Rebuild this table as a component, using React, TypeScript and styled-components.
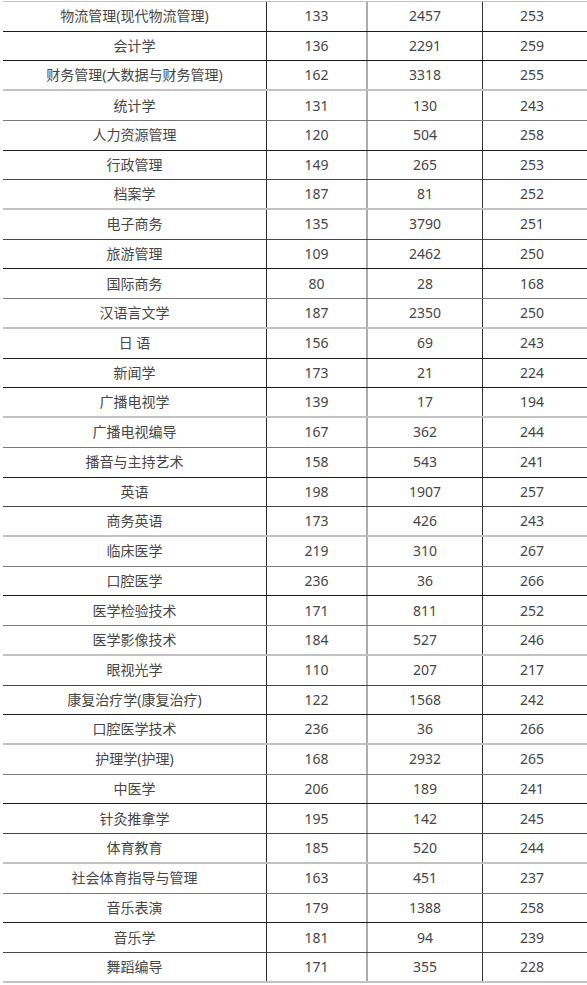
import styled, { createGlobalStyle } from 'styled-components'

type Tone = 'dark' | 'deep' | 'mid' | 'light'

type Major = {
  name: string
  plan: number
  applicants: number
  score: number
  tone: Tone
}

const majors: Major[] = [
  { name: '物流管理(现代物流管理)', plan: 133, applicants: 2457, score: 253, tone: 'dark' },
  { name: '会计学', plan: 136, applicants: 2291, score: 259, tone: 'dark' },
  { name: '财务管理(大数据与财务管理)', plan: 162, applicants: 3318, score: 255, tone: 'light' },
  { name: '统计学', plan: 131, applicants: 130, score: 243, tone: 'mid' },
  { name: '人力资源管理', plan: 120, applicants: 504, score: 258, tone: 'dark' },
  { name: '行政管理', plan: 149, applicants: 265, score: 253, tone: 'deep' },
  { name: '档案学', plan: 187, applicants: 81, score: 252, tone: 'light' },
  { name: '电子商务', plan: 135, applicants: 3790, score: 251, tone: 'deep' },
  { name: '旅游管理', plan: 109, applicants: 2462, score: 250, tone: 'dark' },
  { name: '国际商务', plan: 80, applicants: 28, score: 168, tone: 'mid' },
  { name: '汉语言文学', plan: 187, applicants: 2350, score: 250, tone: 'light' },
  { name: '日 语', plan: 156, applicants: 69, score: 243, tone: 'dark' },
  { name: '新闻学', plan: 173, applicants: 21, score: 224, tone: 'dark' },
  { name: '广播电视学', plan: 139, applicants: 17, score: 194, tone: 'light' },
  { name: '广播电视编导', plan: 167, applicants: 362, score: 244, tone: 'mid' },
  { name: '播音与主持艺术', plan: 158, applicants: 543, score: 241, tone: 'dark' },
  { name: '英语', plan: 198, applicants: 1907, score: 257, tone: 'deep' },
  { name: '商务英语', plan: 173, applicants: 426, score: 243, tone: 'light' },
  { name: '临床医学', plan: 219, applicants: 310, score: 267, tone: 'mid' },
  { name: '口腔医学', plan: 236, applicants: 36, score: 266, tone: 'dark' },
  { name: '医学检验技术', plan: 171, applicants: 811, score: 252, tone: 'mid' },
  { name: '医学影像技术', plan: 184, applicants: 527, score: 246, tone: 'light' },
  { name: '眼视光学', plan: 110, applicants: 207, score: 217, tone: 'deep' },
  { name: '康复治疗学(康复治疗)', plan: 122, applicants: 1568, score: 242, tone: 'dark' },
  { name: '口腔医学技术', plan: 236, applicants: 36, score: 266, tone: 'light' },
  { name: '护理学(护理)', plan: 168, applicants: 2932, score: 265, tone: 'mid' },
  { name: '中医学', plan: 206, applicants: 189, score: 241, tone: 'dark' },
  { name: '针灸推拿学', plan: 195, applicants: 142, score: 245, tone: 'deep' },
  { name: '体育教育', plan: 185, applicants: 520, score: 244, tone: 'light' },
  { name: '社会体育指导与管理', plan: 163, applicants: 451, score: 237, tone: 'mid' },
  { name: '音乐表演', plan: 179, applicants: 1388, score: 258, tone: 'dark' },
  { name: '音乐学', plan: 181, applicants: 94, score: 239, tone: 'deep' },
  { name: '舞蹈编导', plan: 171, applicants: 355, score: 228, tone: 'light' },
]

const lineColor: Record<Tone, string> = {
  dark: '#1c1c1c',
  deep: '#464646',
  mid: '#7a7a7a',
  light: '#c2c2c2',
}

const GlobalStyle = createGlobalStyle`
  html, body {
    margin: 0;
    padding: 0;
    background: #ffffff;
  }
  body {
    font-family: "Noto Sans", "Noto Sans CJK SC", sans-serif;
  }
`

const ROW_HEIGHT = 29.73

const App = () => {
  return (
    <>
      <GlobalStyle />
      <Sheet>
        <Table>
          {majors.map((major) => (
            <Row key={major.name} $tone={major.tone}>
              <NameCell>{major.name}</NameCell>
              <PlanCell>{major.plan}</PlanCell>
              <ApplicantsCell>{major.applicants}</ApplicantsCell>
              <ScoreCell>{major.score}</ScoreCell>
            </Row>
          ))}
        </Table>
      </Sheet>
    </>
  )
}

const Sheet = styled.div`
  width: 587px;
  height: 985px;
  overflow: hidden;
  padding-top: 1px;
  padding-left: 3px;
  box-sizing: border-box;
  background: #ffffff;
`

const Table = styled.div`
  display: flex;
  flex-direction: column;
  border-top: 1px solid #c2c2c2;
  width: 584px;
`

const Row = styled.div<{ $tone: Tone }>`
  display: grid;
  grid-template-columns: 264px 101px 115px 1fr;
  height: ${ROW_HEIGHT}px;
  box-sizing: border-box;
  border-bottom: ${({ $tone }) => ($tone === 'light' ? 2 : 1)}px solid
    ${({ $tone }) => lineColor[$tone]};
`

const Cell = styled.div`
  display: flex;
  align-items: center;
  justify-content: center;
  box-sizing: border-box;
  font-size: 14px;
  line-height: 1;
  color: #464646;
  white-space: nowrap;
`

const NameCell = styled(Cell)`
  border-right: 1px solid #2a2a2a;
`

const PlanCell = styled(Cell)`
  border-right: 2px solid #acacac;
`

const ApplicantsCell = styled(Cell)`
  border-right: 1px solid #333333;
`

const ScoreCell = styled(Cell)`
  padding-right: 6px;
`

export default App
